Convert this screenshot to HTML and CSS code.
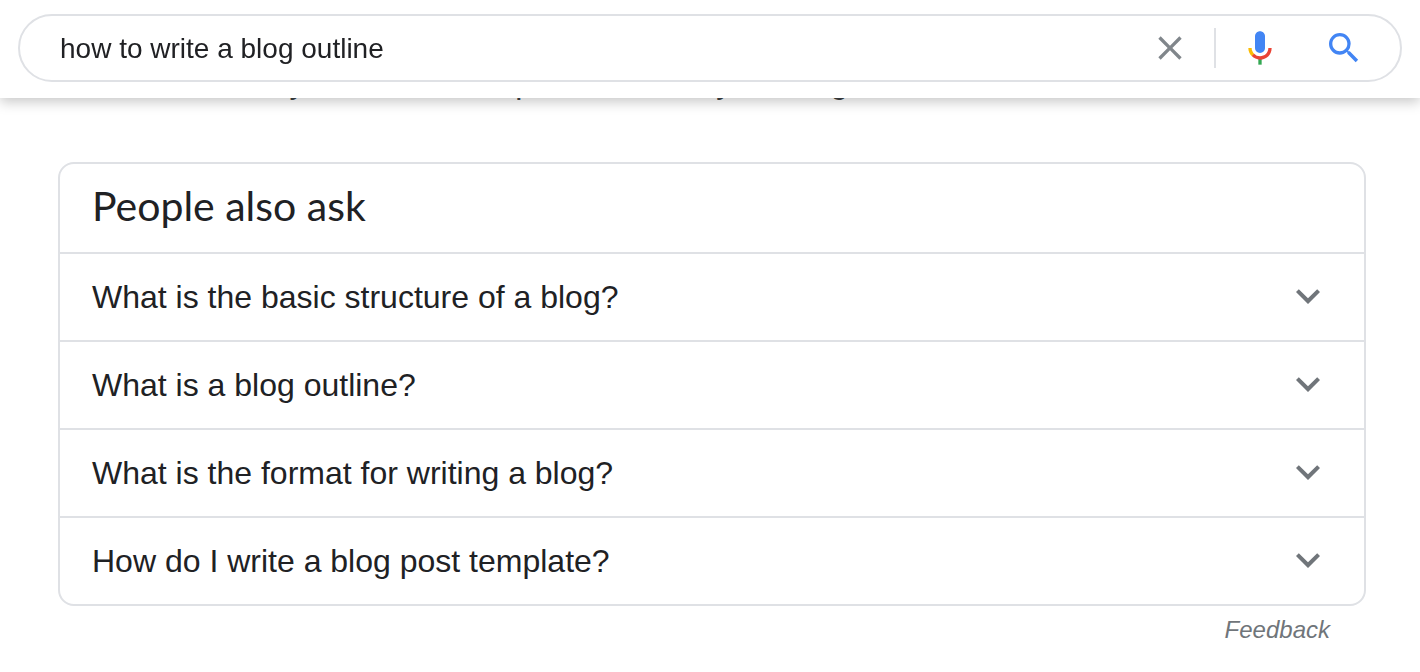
FILE: index.html
```html
<!DOCTYPE html>
<html lang="en">
<head>
    <meta charset="UTF-8">
    <meta name="viewport" content="width=device-width, initial-scale=1.0">
    <title>how to write a blog outline</title>
    <link rel="stylesheet" href="styles.css">
</head>
<body>

<header class="header">
    <form class="search" role="search">
        <input type="text" class="search-input" aria-label="Search" value="how to write a blog outline">
        <button type="reset" class="icon-button" aria-label="Clear">
            <svg viewBox="0 0 24 24" fill="#80868b"><path d="M19 6.41L17.59 5 12 10.59 6.41 5 5 6.41 10.59 12 5 17.59 6.41 19 12 13.41 17.59 19 19 17.59 13.41 12z"/></svg>
        </button>
        <span class="divider"></span>
        <button type="button" class="icon-button" aria-label="Search by voice">
            <svg viewBox="0 0 24 24">
                <path fill="#4285f4" d="M12 15c1.66 0 3-1.31 3-2.97V5.01C15 3.35 13.66 2 12 2S9 3.34 9 5.01v7.02C9 13.69 10.34 15 12 15z"/>
                <path fill="#34a853" d="M11 18.08h2V22h-2z"/>
                <path fill="#fbbc05" d="M7.05 16.87C5.78 15.54 5 14.04 5 12h2c0 1.45.56 2.42 1.47 3.38v.32l-1.15 1.18z"/>
                <path fill="#ea4335" d="M12 16.93a4.97 5.25 0 0 1-3.54-1.55l-1.41 1.49C8.31 18.21 10.07 19 12 19c3.87 0 6.99-2.92 6.99-7H17c0 2.92-2.24 4.93-5 4.93z"/>
            </svg>
        </button>
        <button type="submit" class="icon-button submit" aria-label="Search">
            <svg viewBox="0 0 24 24" fill="#4285f4"><path d="M15.5 14h-.79l-.28-.27A6.471 6.471 0 0 0 16 9.5 6.5 6.5 0 1 0 9.5 16c1.61 0 3.09-.59 4.23-1.57l.27.28v.79l5 4.99L20.49 19l-4.99-5zm-6 0C7.01 14 5 11.99 5 9.5S7.01 5 9.5 5 14 7.01 14 9.5 11.99 14 9.5 14z"/></svg>
        </button>
    </form>
</header>

<main class="results">
    <p class="snippet">Use the best way to create new post ideas for your blog</p>

    <section class="card">
        <h2 class="card-title">People also ask</h2>
        <button type="button" class="question" aria-expanded="false">
            What is the basic structure of a blog?
            <svg viewBox="0 0 24 24"><path d="M16.59 8.59L12 13.17 7.41 8.59 6 10l6 6 6-6z"/></svg>
        </button>
        <button type="button" class="question" aria-expanded="false">
            What is a blog outline?
            <svg viewBox="0 0 24 24"><path d="M16.59 8.59L12 13.17 7.41 8.59 6 10l6 6 6-6z"/></svg>
        </button>
        <button type="button" class="question" aria-expanded="false">
            What is the format for writing a blog?
            <svg viewBox="0 0 24 24"><path d="M16.59 8.59L12 13.17 7.41 8.59 6 10l6 6 6-6z"/></svg>
        </button>
        <button type="button" class="question" aria-expanded="false">
            How do I write a blog post template?
            <svg viewBox="0 0 24 24"><path d="M16.59 8.59L12 13.17 7.41 8.59 6 10l6 6 6-6z"/></svg>
        </button>
    </section>

    <a href="#" class="feedback">Feedback</a>
</main>

</body>
</html>
```
FILE: styles.css
```css
* {
    box-sizing: border-box;
}
body {
    margin: 0;
    background: #fff;
    color: #202124;
    font-family: "Liberation Sans", Arial, sans-serif;
}
button {
    padding: 0;
    border: none;
    background: none;
    color: inherit;
    font-family: inherit;
    cursor: pointer;
}

/* search bar, stays on top of the results */
.header {
    position: fixed;
    top: 0;
    left: 0;
    right: 0;
    z-index: 1;
    padding: 14px 18px 16px;
    background: #fff;
    box-shadow: 0 4px 12px rgba(0, 0, 0, 0.22);
}
.search {
    display: flex;
    align-items: center;
    height: 68px;
    padding: 0 36px 0 40px;
    border: 2px solid #dfe1e5;
    border-radius: 34px;
}
.search-input {
    flex: 1;
    min-width: 0;
    padding: 2px 0 0;
    border: none;
    outline: none;
    background: none;
    color: #202124;
    font-family: inherit;
    font-size: 28px;
}
.icon-button {
    width: 40px;
    height: 40px;
}
.icon-button svg {
    display: block;
}
.divider {
    width: 2px;
    height: 40px;
    margin: 0 24px;
    background: #dfe1e5;
}
.submit {
    margin-left: 44px;
}

.results {
    display: flex;
    flex-direction: column;
    padding: 62px 54px 24px 60px;
}
.snippet {
    margin: 0 0 60px;
    font-size: 32px;
    line-height: 40px;
    color: #3c4043;
}

.card {
    margin-left: -2px;
    border: 2px solid #dfe1e5;
    border-radius: 16px;
}
.card-title {
    margin: 0;
    padding: 18px 32px 22px;
    font-family: Lato, sans-serif;
    font-size: 41px;
    font-weight: 400;
    line-height: 48px;
}
.question {
    display: flex;
    justify-content: space-between;
    align-items: center;
    width: 100%;
    height: 88px;
    padding: 0 32px;
    border-top: 2px solid #dfe1e5;
    font-size: 32px;
    text-align: left;
}
.question svg {
    flex: none;
    width: 48px;
    height: 48px;
    margin-bottom: 2px;
    fill: #70757a;
}

.feedback {
    align-self: flex-end;
    margin: 10px 36px 0 0;
    color: #70757a;
    font-size: 24px;
    font-style: italic;
    line-height: 28px;
    text-decoration: none;
}
```
